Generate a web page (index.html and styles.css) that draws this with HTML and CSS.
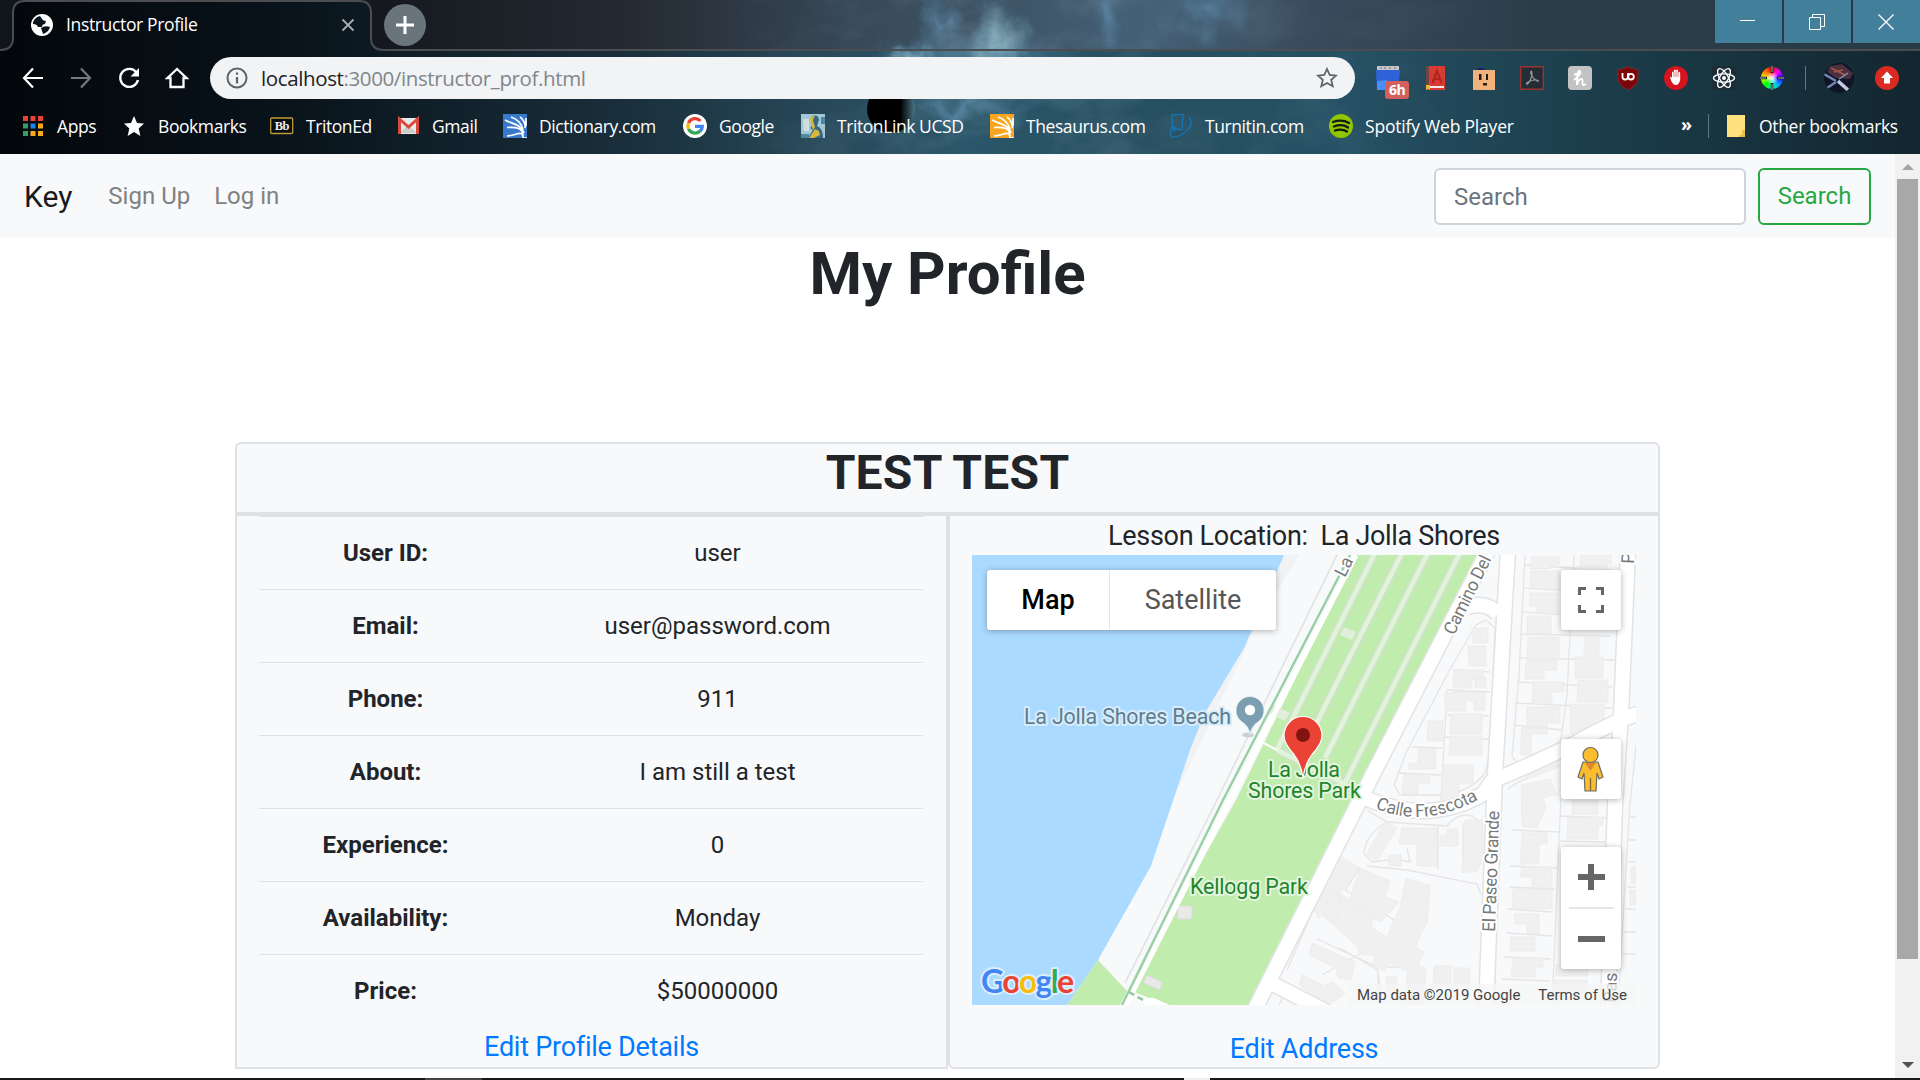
FILE: index.html
```html
<!DOCTYPE html>
<html lang="en">
<head>
<meta charset="utf-8">
<title>Instructor Profile</title>
<link rel="stylesheet" href="styles.css">
</head>
<body>
<header class="chrome">
  <svg class="backdrop" width="1920" height="154" viewBox="0 0 1920 154">
    <defs>
      <linearGradient id="bar"><stop offset="0" stop-color="#03070b"/><stop offset=".15" stop-color="#09131b"/><stop offset=".33" stop-color="#1a303c"/><stop offset=".43" stop-color="#28495a"/><stop offset=".5" stop-color="#2c5669"/><stop offset=".6" stop-color="#264f60"/><stop offset=".7" stop-color="#265064"/><stop offset=".82" stop-color="#1c3f4d"/><stop offset="1" stop-color="#13262f"/></linearGradient>
      <linearGradient id="strip"><stop offset="0" stop-color="#10151a"/><stop offset=".2" stop-color="#15191f"/><stop offset=".33" stop-color="#252b33"/><stop offset=".45" stop-color="#384a59"/><stop offset=".6" stop-color="#456076"/><stop offset=".68" stop-color="#394b5c"/><stop offset=".8" stop-color="#2c3d4a"/><stop offset="1" stop-color="#283b46"/></linearGradient>
      <radialGradient id="glow"><stop offset="0" stop-color="#a4c9d2" stop-opacity=".85"/><stop offset="1" stop-color="#5d92ab" stop-opacity="0"/></radialGradient>
      <radialGradient id="blue"><stop offset="0" stop-color="#6594b4" stop-opacity=".65"/><stop offset="1" stop-color="#5080a0" stop-opacity="0"/></radialGradient>
      <linearGradient id="moon"><stop offset=".7" stop-color="#000"/><stop offset="1" stop-color="#4c7686"/></linearGradient>
      <filter id="cloud" x="0" y="0" width="100%" height="100%"><feTurbulence type="fractalNoise" baseFrequency=".014 .025" numOctaves="5" seed="8"/><feColorMatrix values="0 0 0 0 .5  0 0 0 0 .72  0 0 0 0 .8  1.500 0 0 0 -.6"/></filter>
      <filter id="torn" filterUnits="userSpaceOnUse" x="780" y="-20" width="560" height="190"><feTurbulence type="fractalNoise" baseFrequency=".03 .025" numOctaves="5" seed="3"/><feDisplacementMap in="SourceGraphic" scale="50" xChannelSelector="R" yChannelSelector="G"/></filter>
      <linearGradient id="fade"><stop offset=".38" stop-color="#000"/><stop offset=".5" stop-color="#ddd"/><stop offset=".66" stop-color="#555"/><stop offset=".8" stop-color="#000"/></linearGradient>
      <mask id="m"><rect width="1920" height="154" fill="url(#fade)"/></mask>
    </defs>
    <rect width="1920" height="154" fill="url(#bar)"/>
    <path fill="url(#strip)" d="M0 0H1920V50H384Q371 50 371 38V13Q371 1 359 1H25Q13 1 13 13V38Q13 50 0 50Z"/>
    <g mask="url(#m)"><rect width="1920" height="154" filter="url(#cloud)" opacity=".35"/></g>
    <g filter="url(#torn)">
      <ellipse cx="915" cy="58" rx="22" ry="18" fill="url(#glow)"/>
      <ellipse cx="1000" cy="46" rx="34" ry="44" fill="url(#glow)"/>
      <ellipse cx="970" cy="62" rx="110" ry="30" fill="url(#blue)"/>
      <ellipse cx="935" cy="20" rx="16" ry="30" fill="url(#blue)"/>
      <ellipse cx="1114" cy="14" rx="20" ry="34" fill="url(#blue)"/>
      <ellipse cx="1205" cy="14" rx="46" ry="30" fill="url(#blue)"/>
      <ellipse cx="965" cy="106" rx="80" ry="18" fill="url(#blue)"/>
    </g>
    <circle cx="891" cy="109" r="24" fill="url(#moon)"/>
    <path d="M0 50Q13 50 13 38V13Q13 1 25 1H359Q371 1 371 13V38Q371 50 384 50H1920" fill="none" stroke="#4b4d50" stroke-width="2"/>
  </svg>

  <div class="tabs">
    <div class="tab">
      <svg width="22" height="22" viewBox="0 0 22 22"><circle cx="11" cy="11" r="11" fill="#fff"/><path d="M9 2C5 3 2 6 2 10q4 0 5 3h4q0-3 3-3l1-3q-3 0-4-2zM10 14q4-3 9-1-1 5-7 7-1-3-2-6z" fill="#0b131a"/></svg>
      <span class="tab-title">Instructor Profile</span>
      <svg width="14" height="14" viewBox="0 0 14 14"><path d="M1.500 1.500l11 11M12.500 1.500l-11 11" stroke="#a9abad" stroke-width="1.800"/></svg>
    </div>
    <div class="new-tab"><svg width="18" height="18" viewBox="0 0 18 18"><path d="M9 0v18M0 9h18" stroke="#fff" stroke-width="3"/></svg></div>
    <div class="window-buttons">
      <div><svg width="15" height="15" viewBox="0 0 15 15"><path d="M0 6.500h15" stroke="#fff"/></svg></div>
      <div><svg width="16" height="16" viewBox="0 0 16 16"><path d="M.5 3.500h11v12h-11zM3.500 3.500v-3h12v12h-4" fill="none" stroke="#fff"/></svg></div>
      <div><svg width="16" height="16" viewBox="0 0 16 16"><path d="M.5.500l15 15M15.500.500l-15 15" stroke="#fff" stroke-width="1.300"/></svg></div>
    </div>
  </div>

  <div class="toolbar">
    <div class="nav-buttons">
      <svg viewBox="0 0 24 24"><path d="M22 12H3M12 2.500L3 12l9 9.500" fill="none" stroke="#fff" stroke-width="2.200"/></svg>
      <svg viewBox="0 0 24 24"><path d="M2 12h19M12 2.500L21 12l-9 9.500" fill="none" stroke="#75797c" stroke-width="2.200"/></svg>
      <svg viewBox="0 0 24 24"><path d="M19.500 6.500A9 9 0 1 0 21 14" fill="none" stroke="#fff" stroke-width="2.400"/><path d="M22 2v8.500h-8.500z" fill="#fff"/></svg>
      <svg viewBox="0 0 24 24"><path d="M5.500 21V12H2.500L12 3l9.500 9h-3v9z" fill="none" stroke="#fff" stroke-width="2.300"/></svg>
    </div>
    <div class="omnibox">
      <svg width="22" height="22" viewBox="0 0 22 22"><circle cx="11" cy="11" r="9.500" fill="none" stroke="#5f6368" stroke-width="2"/><path d="M11 5.500v2.300M11 10v6.500" stroke="#5f6368" stroke-width="2.200"/></svg>
      <span class="url">localhost<span>:3000/instructor_prof.html</span></span>
      <svg width="22" height="22" viewBox="0 0 22 22"><path d="M11 2l2.700 6 6.300.600-4.800 4.300 1.500 6.400L11 16l-5.700 3.300 1.500-6.400L2 8.600 8.300 8z" fill="none" stroke="#5f6368" stroke-width="1.800"/></svg>
    </div>
    <div class="extensions">
      <div class="calendar"><svg viewBox="0 0 24 24"><path d="M0 4h24l-1 11-12 1-1 8H1z" fill="#2e62d9"/><path d="M1 15l10-1v10H1z" fill="#4b8df5"/><path d="M1 0h22v4H1z" fill="#c5c5c5"/><path d="M5 1v2M9 1v2M14 1v2M19 1v2" stroke="#777"/></svg><b>6h</b></div>
      <svg viewBox="0 0 24 24"><path d="M2 0h4v24H2z" fill="#6e4646"/><path d="M5 0h16v24H5z" fill="#d93a31"/><path d="M8.500 17L13 5l4.500 12M10 13h6" stroke="#ad2720" stroke-width="2.200" fill="none"/><path d="M6 21h14" stroke="#eee" stroke-width="2"/><path d="M2 19h4v5l-2-1-2 1z" fill="#f5b72d"/></svg>
      <svg viewBox="0 0 24 24"><path d="M4 4l3-2h4l2 2z" fill="#17215a"/><path d="M1 4h22v20H1z" fill="#f1b27c"/><path d="M7 8h2.500v6H7zM14 8h2v6h-2z" fill="#211c18"/><path d="M11 17h4v2.500h-4z" fill="#282018"/></svg>
      <svg viewBox="0 0 24 24"><path d="M.7.700h22.600v22.600H.7z" fill="#242c36" stroke="#9b332d" stroke-width="1.400"/><path d="M11.500 5c-2 0 0 7 5.500 10 3 1 1-1.500-3-1-4 .500-8 3-7.500 4 1.500 1.500 7-8 5-13z" fill="none" stroke="#929ba2" stroke-width="1.200"/></svg>
      <svg viewBox="0 0 24 24"><rect width="24" height="24" rx="4" fill="#c3c3c3"/><path d="M6 14C10 11 13 7 12 5 10 4 9 8 9 19c1-6 5.500-8 5.500-4-.5 4 .5 5 3.500 3M6 8.500l6-1" fill="none" stroke="#fff" stroke-width="1.900"/></svg>
      <svg viewBox="0 0 24 24"><path d="M12 .5c4 2.500 7 3 10 3V12c0 6-5 9-10 12C7 21 2 18 2 12V3.500c3 0 6-.5 10-3z" fill="#7b0509" stroke="#a8282b" stroke-width=".7"/><path d="M6.500 7v4q0 2.500 2.700 2.500T12 11V7" fill="none" stroke="#fff" stroke-width="1.800"/><circle cx="15" cy="10.700" r="2.800" fill="none" stroke="#fff" stroke-width="1.800"/></svg>
      <svg viewBox="0 0 24 24"><circle cx="12" cy="12" r="12" fill="#d6141d"/><path d="M6 11q1-1 2 1V6.500q1-2 2 0v-2q1-2 2 0v0q1-2 2 0v2q2-2 2.200 1V13q-.7 6-4.700 6-3.500 0-5.500-8z" fill="#fff"/><path d="M10 6v5M12 5v6M14 6v5" stroke="#d6141d" stroke-width=".6"/></svg>
      <svg viewBox="0 0 24 24"><path d="M0 0h24v24H0z" fill="#1c2d38"/><g fill="none" stroke="#fff" stroke-width="1.300"><ellipse cx="12" cy="12" rx="10.500" ry="4.200"/><ellipse cx="12" cy="12" rx="10.500" ry="4.200" transform="rotate(60 12 12)"/><ellipse cx="12" cy="12" rx="10.500" ry="4.200" transform="rotate(120 12 12)"/></g><circle cx="12" cy="12" r="2" fill="#fff"/></svg>
      <div class="wheel"><svg viewBox="0 0 24 24"><path d="M12 1v6M12 17v6M1 12h6M17 12h6" stroke="#0c161c" stroke-width="2.600"/><path d="M12 0v6M12 18v6M0 12h6M18 12h6" stroke="#dfe8ea" stroke-width=".8"/></svg></div>
    </div>
    <i class="rule"></i>
    <svg class="avatar" viewBox="0 0 30 30"><defs><clipPath id="c"><circle cx="15" cy="15" r="15"/></clipPath></defs><g clip-path="url(#c)"><path d="M0 0h30v30H0z" fill="#0f1526"/><path d="M6 3l12-2 11 9-3 6-14-1-9-6z" fill="#4b3040"/><path d="M7 5l14 7M10 9l9-2" stroke="#a55547" stroke-width="1.600"/><path d="M14 18l10 9" stroke="#c3c9e2" stroke-width="3.600"/><path d="M0 11l12 7M3 25l9-6" stroke="#6f86ba" stroke-width="2.600"/><path d="M15 16l9-6" stroke="#8b95b5" stroke-width="1.500"/></g></svg>
    <svg class="update" viewBox="0 0 24 24"><circle cx="12" cy="12" r="12" fill="#d92b22"/><path d="M12 5.500l6 6.500h-3v5.500H9V12H6z" fill="#fff"/></svg>
  </div>

  <nav class="bookmarks">
    <a><svg class="apps" viewBox="0 0 20 20"><path d="M0 0h5v5H0zM7.500 0h5v5h-5zM15 0h5v5h-5z" fill="#ea4335"/><path d="M0 7.500h5v5H0zM0 15h5v5H0z" fill="#34a060"/><path d="M7.500 7.500h5v5h-5z" fill="#1a83ee"/><path d="M15 7.500h5v5h-5zM15 15h5v5h-5zM7.500 15h5v5h-5z" fill="#fba919"/></svg>Apps</a>
    <a><svg viewBox="0 0 24 24"><path d="M12 2l3 7 7 .600-5.300 5 1.700 7.400L12 18l-6.400 4 1.700-7.400L2 9.600 9 9z" fill="#fff"/></svg>Bookmarks</a>
    <a><svg viewBox="0 0 24 24"><rect x=".7" y="4" width="22" height="15.500" rx="1" fill="#090c10" stroke="#bd9b35" stroke-width="1.300"/><text x="11.800" y="16.200" text-anchor="middle" class="bb">Bb</text></svg>TritonEd</a>
    <a><svg viewBox="0 0 24 24"><path d="M2 4h21v16H2z" fill="#e9e9e9"/><path d="M4 19l8-8 9 8" fill="#ccc"/><path d="M3.500 20V5l9 8 9-8v15" fill="none" stroke="#d84a3d" stroke-width="3"/></svg>Gmail</a>
    <a><svg viewBox="0 0 24 24"><path d="M0 0h24v24H0z" fill="#3979cc"/><path d="M24 24h-4c0-9-8-2-16-2M20 22C20 13 12 13 4 13.500M21 19C18 10 9 10 2 6M20 15C18 9 14 5 8 3M22 14c1-4-2-9-5-11M23 12V4" fill="none" stroke="#fff" stroke-width="1.700"/></svg>Dictionary.com</a>
    <a><svg viewBox="0 0 24 24"><circle cx="12" cy="12" r="12" fill="#fff"/><g fill="none" stroke-width="3.300"><path d="M17.500 7A7.200 7.200 0 0 0 5.500 9" stroke="#ea4335"/><path d="M5.500 9a7.200 7.200 0 0 0 0 6" stroke="#fbbc05"/><path d="M5.500 15A7.200 7.200 0 0 0 17 17" stroke="#34a853"/><path d="M17 17.300a7 7 0 0 0 2.300-5H12" stroke="#4285f4"/></g></svg>Google</a>
    <a><svg viewBox="0 0 24 24"><path d="M0 0h24v24H0z" fill="#a3c8d5"/><path d="M2 5h6v12H3z" fill="#d0dde1"/><path d="M10 3q7-4 8 3l-2 6q6 2 6 12H7l5-8q-5-2 0-5z" fill="#356881"/><path d="M9 5q1-3 5-3l-2 4 2 7-2 3-2-5zM14 15l4 2 1 4-6 3h-5z" fill="#d4b73c"/><path d="M0 20h8v4H0zM20 3h4v7h-4z" fill="#4b8aa5"/></svg>TritonLink UCSD</a>
    <a><svg viewBox="0 0 24 24"><path d="M0 0h24v24H0z" fill="#f9a51f"/><path d="M24 24h-4c0-9-8-2-16-2M20 22C20 13 12 13 4 13.500M21 19C18 10 9 10 2 6M20 15C18 9 14 5 8 3M22 14c1-4-2-9-5-11M23 12V4" fill="none" stroke="#fff" stroke-width="1.700"/></svg>Thesaurus.com</a>
    <a><svg viewBox="0 0 24 24"><path d="M3 1l11-1-1 15q-3 2-6-1l-3 2zM20 3c7 9-6 20-17 20-3-4-1-10 1-11l3 3-2 2" fill="none" stroke="#1673b4" stroke-width="1.400"/></svg>Turnitin.com</a>
    <a><svg viewBox="0 0 24 24"><circle cx="12" cy="12" r="12" fill="#91c500"/><path d="M4 8q9-3 16 1M5 12.500q8-3 14 1M6 16.500q7-2 12 1" fill="none" stroke="#101b0e" stroke-width="2.300" stroke-linecap="round"/></svg><span class="wide">Spotify Web Player</span></a>
    <b class="more">»</b>
    <i class="rule"></i>
    <a class="other"><svg viewBox="0 0 18 24"><path d="M0 1h18v14l-1 8H0z" fill="#ffe27d"/><path d="M12 22v-1h3v-5h3v7h-6z" fill="#e9bf43"/></svg>Other bookmarks</a>
  </nav>
</header>

<div class="viewport">
<div class="page">
  <nav class="navbar">
    <a class="brand">Key</a><a class="nav-link">Sign Up</a><a class="nav-link">Log in</a>
    <form class="search"><input type="text" placeholder="Search"><button type="button">Search</button></form>
  </nav>
  <h1>My Profile</h1>
  <main class="profile">
    <h2>TEST TEST</h2>
    <section class="details">
      <table>
        <tr><th>User ID:</th><td>user</td></tr>
        <tr><th>Email:</th><td>user@password.com</td></tr>
        <tr><th>Phone:</th><td>911</td></tr>
        <tr><th>About:</th><td>I am still a test</td></tr>
        <tr><th>Experience:</th><td>0</td></tr>
        <tr><th>Availability:</th><td>Monday</td></tr>
        <tr><th>Price:</th><td>$50000000</td></tr>
      </table>
      <a class="edit">Edit Profile Details</a>
    </section>
    <section class="location">
      <p>Lesson Location:&nbsp; La Jolla Shores</p>
      <div class="map">
        <svg width="664" height="450" viewBox="0 0 664 450">
          <path d="M0 0h664v450H0z" fill="#f8f9fb"/>
          <path d="M0 0H327L284 72 201 245 0 300z" fill="#f1f2f3"/>
          <path d="M0 0H312L272 93 233 158 218 195 179 311 126 405 95 450H0z" fill="#aadaff"/>
          <path d="M126 405l29 31-7 14H95zM384 0H508L390 232 281 450H193L170 440 157 435 264 245z" fill="#c0ecae"/>
          <g fill="none" stroke="#d9ddd5" stroke-width="7"><path d="M403-2L305 195M430-2L327 203M456-2L353 203M488-2L373 228M305 195l70 35"/></g>
          <g fill="none" stroke="#e0f5d7" stroke-width="4.500"><path d="M403-2L305 195M430-2L327 203M456-2L353 203M488-2L373 228M305 195l70 35"/></g>
          <path d="M288 186l17 9" stroke="#fff" stroke-width="2"/>
          <path d="M372 72l12 5-4 8-12-5zM300 149l18 9-5 8-18-8z" fill="#e1eedb"/>
          <path d="M206 351h14v13h-15zM175 420l15 7-2 8-17-7z" fill="#e9eae8" stroke="#d8dcd6"/>
          <path d="M365 0L245 245 153 428" fill="none" stroke="#e3e3e3" stroke-width="1.700"/>
          <path d="M384 0L258 245 153 452" fill="none" stroke="#fff" stroke-width="5"/>
          <path d="M378 0L251 245 150 450" fill="none" stroke="#99cfa5" stroke-width="2.400"/>
          <path d="M157 437l14 8" stroke="#8cc79c" stroke-width="2.500" stroke-dasharray="6 4"/>
          <path d="M172 450q1-9 10-7l20 9z" fill="#fff"/>

          <g class="lot">
            <path d="M553 0l-6 120-7 82 7 7M602 0l-7 140-8 60M553 10l48 3 38 2M551 33l50 3M549 57l50 3M548 79l90 2M546 103l98 2M545 127l95 5M543 148l97 5M541 170l50 5"/>
            <path d="M504 70l10-5 9 8-5 125-5 20q-15 20-45 22h-40l-6-10 12-32 42-80zM481 115l37 2M474 135l44 2M475 160l42 1M472 182l45 2M440 192l30 1M425 218l44 2M475 135l-6 110"/>
            <path d="M536 235q5-8 52-25l30-12M529 238l-7 212M589 240l-9 210M540 275l48 2M538 311l47 2M537 332l46 2M535 354l46 3M534 378l47 3M532 402l47 2M530 424l48 2M588 261l46 2M588 286l46 1M658 245l-12 205M664 190l-6 60M658 262h6M657 285h7M656 307h8M655 332h9M653 354h11M652 377h12M651 399h13"/>
            <path d="M395 255l20 12 60 4q10-14 25-10l10 8M416 267q-22 10-24 32l8 8 25-3M395 311l40 4 70 14 4 10M388 313l-15 22 27 15 22 15 12-2M466 271v44M491 268v50M418 303l20 4-3-14M434 325v16M360 315l-10 20-35 80M340 332l38 20M350 420l45-25M345 384l60 28 6 35M368 393l38 22v35M310 427l48 22M313 437l-8 18M430 412h-25"/>
          </g>
          <g class="house">
            <path d="M560 2h27v8h-9v4h-20zM609 0h30v9h-31zM559 16h29v18h-30zM558 38h29v19h-22v-6h-8zM555 61h24v18h-24zM556 82h31v22h-32zM554 105h31v10h-13v9h-19zM561 127h31v10h-12v12h-20zM555 152h33v16h-13v5h-20zM550 172h25v7h-16v21h-11zM608 10h27v10h-27zM613 80h14v21h-15zM603 102h28v21h-28zM606 125h30v22h-31zM598 149h34v20l-14 10h-20z"/>
            <path d="M500 73h16v15h-15zM496 91h18v20h-17zM482 115h29v9h-11v9h-19zM503 122h11v11h-11zM480 137h33v18h-11v-9h-8v10h-21v-18h7zM479 159h31v20h-32zM478 181h32v19h-33zM456 166h15v20h-16zM446 194h18v20h-27v-6h9zM432 219h26v9h-12v11h-16zM471 210h30v19h-14v15h-18z"/>
            <path d="M549 230l30-6 5 16-13 3 3 10-9 20-15-2zM550 278h25v11h-8v20h-19zM550 312h30v20h-20v-10h-12zM541 334h39v20h-40zM542 359h25v20h-12v-10h-12zM539 382h24v14h-25zM541 403h30v9h-8v10h-24zM600 245h26v14h-26zM596 262h35v8h-5v14h-31zM584 410h32v11h-33zM583 425h32v18h-34z"/>
            <path d="M413 266l12 7-20 33-11-6zM430 273h35v38h-20v-22h-18zM468 280h7v-6h11v17h-18zM417 300h12v11h-12zM493 265h18v40l-7 12h-14zM388 313l30 13-5 16 14 5-18 20-33-17zM434 323l24 8-3 37-6 10-5 14 8 5-6 13 8 4-3 36h-16v-34l-18-8-5 8-11-6 2-9-14-2-6-10-32-28 8-27 44 24-4 14 16 10 13-30zM462 411h17v20h-18zM482 413h16v18h-16zM350 333l18-32 20 12-20 25-3 30-15-10-3 6-7-14zM340 388l43 19-4 18-13-2-2-10-27-13zM330 420l22 11 9-4 12 11-16 12-30-20zM414 422h11v14h-11z"/>
            <path d="M552 207l30-10 5 15-32 12zM659 312h5v17h-5zM658 335h6v15h-6z"/>
          </g>
          <path class="casing" d="M520-12L402 217 281 458"/>
          <path class="casing" d="M536-5L523 220 514 455M656-5L649 160 643 250 636 455M670 158Q650 162 600 190 550 214 520 226L512 238Q490 253 455 256 425 257 385 240M495 52q20-6 31 7M299 428l56 29"/>
          <path class="road" d="M520-12L402 217 281 458"/>
          <path class="road" d="M536-5L523 220 514 455M656-5L649 160 643 250 636 455M670 158Q650 162 600 190 550 214 520 226L512 238Q490 253 455 256 425 257 385 240M495 52q20-6 31 7M299 428l56 29"/>
          <defs><path id="calle" d="M403 253Q455 276 514 240"/></defs>
          <g class="street">
            <text transform="translate(373 23) rotate(-64)">La</text>
            <text transform="translate(482 81) rotate(-64)" textLength="86">Camino Del</text>
            <text transform="translate(523 377) rotate(-88)" textLength="121">El Paseo Grande</text>
            <text><textPath href="#calle" textLength="108">Calle Frescota</textPath></text>
            <text transform="translate(644 448) rotate(-88)">Pas</text>
            <text transform="translate(662 9) rotate(-88)">P</text>
          </g>
          <text class="beach" x="52" y="169" textLength="207">La Jolla Shores Beach</text>
          <g class="park"><text x="296" y="222" textLength="72">La Jolla</text><text x="276" y="243" textLength="113">Shores Park</text><text x="218" y="339" textLength="118">Kellogg Park</text></g>
          <ellipse cx="276" cy="180" rx="6" ry="2.500" fill="#ccd0d2"/>
          <path d="M278 180q-1-9-8-13a14 14 0 1 1 16 0q-7 4-8 13z" fill="#7b9eb0" stroke="#e9f2f6" stroke-width=".8"/><circle cx="278" cy="155" r="5.200" fill="#fff"/>
          <path d="M331 223.500q-1.500-14-9-24-10-11-10-19a19 19 0 0 1 38 0q0 8-10 19-7.500 10-9 24z" fill="#ea4335" stroke="#fff" stroke-width="1.200"/><circle cx="331" cy="180" r="7" fill="#811411"/>
          <text class="logo" x="9" y="438" textLength="93"><tspan fill="#4285f4">G</tspan><tspan fill="#ea4335">o</tspan><tspan fill="#fbbc05">o</tspan><tspan fill="#4285f4">g</tspan><tspan fill="#34a853">l</tspan><tspan fill="#ea4335">e</tspan></text>
        </svg>
        <div class="map-types"><b>Map</b><span>Satellite</span></div>
        <div class="control fullscreen"><svg width="26" height="26" viewBox="0 0 26 26"><path d="M1.500 8V1.500H8M18 1.500h6.500V8M24.500 18v6.500H18M8 24.500H1.500V18" fill="none" stroke="#666" stroke-width="3"/></svg></div>
        <div class="control pegman"><svg width="28" height="46" viewBox="0 0 28 46"><g fill="#fbbe2e" stroke="#6b6b64" stroke-width="1.200"><path d="M6 16h15l5 15-4 2-2-6-1 18H8L7 27l-2 6-4-2z"/><circle cx="13.500" cy="9" r="7.500"/></g><path d="M8 17h11l-5.500 8z" fill="#e28a27"/><path d="M13.500 32v13" stroke="#79683d" stroke-width="1.300"/></svg></div>
        <div class="control zoom"><svg width="60" height="122" viewBox="0 0 60 122"><path d="M30 17v26M17 30h27M17 92h27" stroke="#666" stroke-width="6"/><path d="M8 61h45" stroke="#e6e6e6" stroke-width="2"/></svg></div>
        <div class="credits"><span>Map data ©2019 Google</span><span>Terms of Use</span></div>
      </div>
      <a class="edit">Edit Address</a>
    </section>
  </main>
</div>
<aside class="scrollbar"><i class="up"></i><i class="thumb"></i><i class="down"></i></aside>
</div>
<footer class="taskbar"><i></i><i></i></footer>
</body>
</html>
```
FILE: styles.css
```css
* { box-sizing: border-box; }
body { margin: 0; width: 1920px; height: 1080px; overflow: hidden; display: flex; flex-direction: column; background: #fff; font-family: Roboto, sans-serif; color: #212529; }
svg { display: block; flex: none; }

.chrome { position: relative; height: 154px; flex: none; font-family: "Open Sans", sans-serif; color: #fff; }
.backdrop { position: absolute; inset: 0; z-index: -1; }
.tabs { height: 51px; display: flex; align-items: flex-start; }
.tab { width: 371px; height: 50px; padding: 0 16px 0 31px; display: flex; align-items: center; }
.tab-title { flex: 1; margin: 0 0 2px 13px; font-size: 17.5px; letter-spacing: -.35px; white-space: nowrap; }
.new-tab { width: 42px; height: 42px; margin: 4px 0 0 13px; border-radius: 50%; background: #6a747c; display: grid; place-items: center; }
.window-buttons { margin-left: auto; display: flex; gap: 2px; }
.window-buttons div { width: 67px; height: 43px; padding-right: 2px; background: #417f9b; display: grid; place-items: center; }

.toolbar { height: 54px; display: flex; align-items: center; padding-left: 21px; }
.nav-buttons { display: flex; gap: 24px; width: 189px; }
.nav-buttons svg { width: 24px; height: 24px; }
.omnibox { width: 1145px; height: 42px; border-radius: 21px; background: #f1f3f4; display: flex; align-items: center; padding: 0 17px 0 16px; }
.url { flex: 1; margin: 0 0 1px 13px; font-size: 20.5px; letter-spacing: -.38px; color: #202124; }
.url span { color: #80868b; }
.extensions { margin-left: 21px; display: flex; gap: 24px; }
.extensions svg { width: 24px; height: 24px; }
.calendar { position: relative; width: 24px; }
.calendar b { position: absolute; left: 9px; top: 15px; width: 24px; height: 18px; border-radius: 3px; background: #d3605b; font-size: 14px; line-height: 18px; text-align: center; letter-spacing: -.5px; }
.wheel { width: 24px; height: 24px; border-radius: 50%; background: radial-gradient(circle, #fff, transparent 40%), conic-gradient(red, #f0f, #30f, #0af, #0fa, #0f0, #df0, #f70, red) content-box; padding: 1px; }
.wheel svg { margin: -1px; }
.rule { width: 1px; height: 24px; background: #5f7580; }
.toolbar .rule { margin-left: 21px; }
.avatar { width: 30px; height: 30px; margin-left: 18px; }
.update { width: 24px; height: 24px; margin-left: 21px; }

.bookmarks { height: 42px; padding-left: 21px; display: grid; align-items: center; grid-template-columns: 101px 148px 126px 107px 180px 118px 189px 179px 160px 352px 27px 19px 1fr; font-size: 17.5px; line-height: 22px; letter-spacing: -.42px; white-space: nowrap; }
.bookmarks a { display: flex; align-items: center; gap: 12px; padding-bottom: 1px; }
.bookmarks a svg { width: 24px; height: 24px; position: relative; top: .5px; }
.bookmarks .apps { width: 20px; height: 20px; margin: 0 2px; }
.bookmarks .other { gap: 14px; letter-spacing: -.32px; }
.bookmarks .other svg { width: 18px; height: 24px; }
.wide { letter-spacing: -.2px; }
.more { font-size: 18px; line-height: 20px; padding-bottom: 4px; }
.bb { font: bold 12.5px "Liberation Serif", serif; fill: #eee; letter-spacing: -.5px; }

.viewport { height: 924px; display: flex; overflow: hidden; }
.page { width: 1895px; }
.navbar { height: 84px; background: #f8f9fa; display: flex; align-items: center; padding: 0 24px; }
.brand { font-size: 30px; margin-right: 36px; color: #1a1a1a; }
.nav-link { font-size: 24px; color: #808182; margin-right: 24px; }
.search { margin-left: auto; display: flex; gap: 12px; }
.search input { width: 312px; height: 57px; padding: 2px 18px 0; border: 2px solid #ced4da; border-radius: 6px; background: #fff; font: 24px Roboto, sans-serif; }
.search input::placeholder { color: #6c757d; opacity: 1; }
.search button { width: 113px; height: 57px; padding: 0; border: 2px solid #28a745; border-radius: 6px; background: transparent; color: #28a745; font: 24px Roboto, sans-serif; }
h1 { margin: 0; height: 204px; text-align: center; font-size: 60px; line-height: 72px; font-weight: 700; }
.profile { width: 1425px; margin: 0 auto; display: grid; grid-template-columns: 713px 712px; grid-template-rows: 72px 555px; }
h2 { grid-column: 1 / 3; margin: 0; border: 2px solid #dee2e6; border-radius: 6px 6px 0 0; background: #f8f9fa; text-align: center; font-size: 48px; line-height: 58px; letter-spacing: .25px; font-weight: 700; }
.details, .location { border: 2px solid #dee2e6; background: #f8f9fb; text-align: center; padding: 0 22px; }
.location { border-radius: 0 0 6px 6px; }
table { width: 664px; table-layout: fixed; border-collapse: separate; border-spacing: 0; font-size: 24px; line-height: 36px; }
th { width: 253px; }
th, td { border-top: 1px solid #dee2e6; padding: 18px 0; text-align: center; }
.edit { display: block; font-size: 27px; line-height: 40px; letter-spacing: -.25px; color: #007bff; }
.details .edit { margin-top: 0; }
.location p { margin: 0; font-size: 27px; line-height: 39px; letter-spacing: -.32px; position: relative; top: 1px; }
.location .edit { margin-top: 24px; }

.map { position: relative; width: 664px; height: 450px; overflow: hidden; }
.lot path { fill: none; stroke: #e5e5e6; stroke-width: 1.300; }
.house { fill: #f0f0f0; stroke: #e7e7e7; stroke-width: .6; }
.casing, .road { fill: none; stroke: #e2e3e4; stroke-width: 17; stroke-linejoin: round; }
.road { stroke: #fff; stroke-width: 14; }
.street text, .beach, .park, .logo { paint-order: stroke; stroke-linejoin: round; }
.street text { font-size: 18px; fill: #75797a; stroke: #fff; stroke-width: 4px; }
.beach { font-size: 21.5px; fill: #607d8f; stroke: #d6ecfb; stroke-width: 4px; }
.park { font-size: 21.5px; fill: #21842b; stroke: #e3f6dc; stroke-width: 4px; }
.logo { font: 500 32px Lato, sans-serif; stroke: #dceefb; stroke-width: 4px; }
.logo tspan { font-weight: 700; }
.map-types { position: absolute; left: 15px; top: 15px; width: 289px; height: 60px; border-radius: 3px; background: #fff; box-shadow: 0 1px 6px rgba(0,0,0,.3); display: flex; font-size: 27px; line-height: 61px; text-align: center; color: #565656; }
.map-types b { width: 123px; font-weight: 500; color: #000; border-right: 1px solid #e4e4e4; }
.map-types span { flex: 1; }
.control { position: absolute; left: 589px; width: 60px; height: 60px; border-radius: 3px; background: #fff; box-shadow: 0 1px 6px rgba(0,0,0,.3); display: grid; place-items: center; }
.fullscreen { top: 15px; }
.pegman { top: 184px; }
.zoom { top: 292px; height: 122px; }
.credits { position: absolute; right: 0; bottom: 0; width: 288px; height: 21px; padding: 0 9px; background: rgba(245,245,245,.75); display: flex; justify-content: space-between; font-size: 15px; line-height: 22px; color: #444; }

.scrollbar { width: 25px; background: #f1f1f1; display: flex; flex-direction: column; align-items: center; }
.scrollbar i { flex: none; }
.up { margin-top: 10px; border: 6px solid transparent; border-top: 0; border-bottom: 6px solid #a3a3a3; }
.thumb { width: 21px; height: 780px; margin-top: 9px; background: #a8a8a8; }
.down { margin-top: auto; margin-bottom: 10px; border: 6px solid transparent; border-bottom: 0; border-top: 6px solid #505050; }
.taskbar { height: 2px; flex: none; background: #1b181b; display: flex; padding-left: 425px; }
.taskbar i { width: 57px; background: #444; }
.taskbar i + i { width: 26px; margin-left: 702px; background: #eee; }
```
